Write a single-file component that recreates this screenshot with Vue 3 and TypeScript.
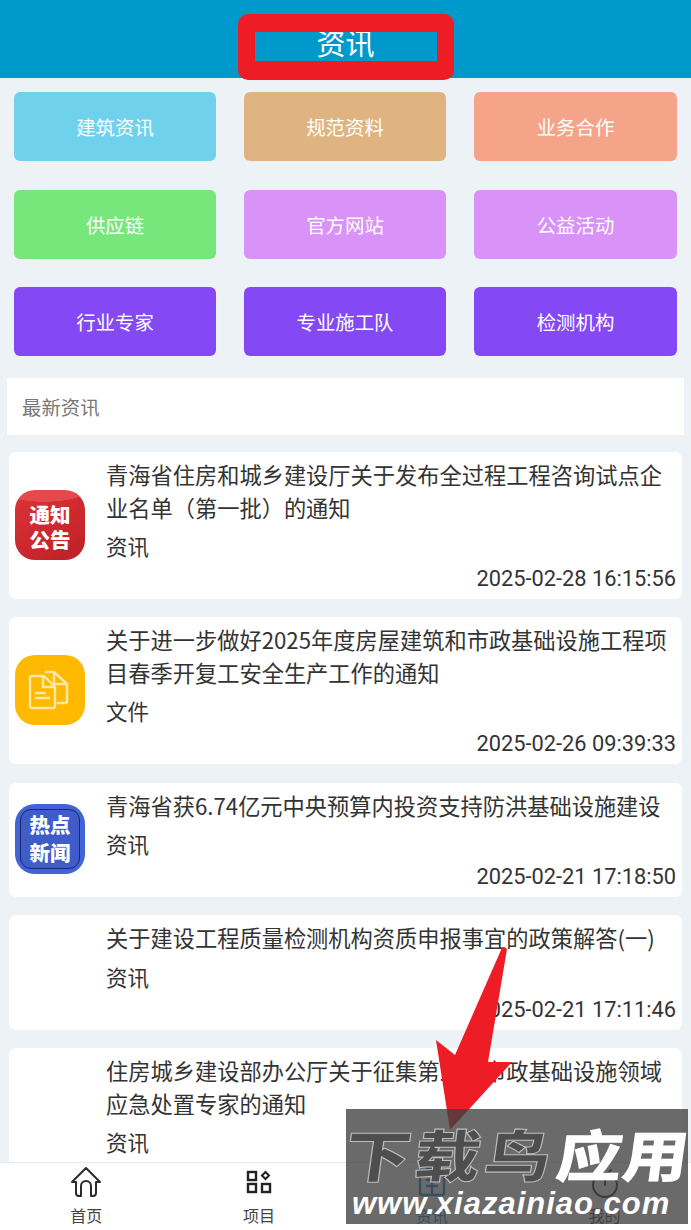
<script setup lang="ts">
interface Item { title: string; tag: string; time: string; icon: string }
const links: { label: string; color: string }[] = [
  { label: '建筑资讯', color: '#70d1ed' },
  { label: '规范资料', color: '#dfb480' },
  { label: '业务合作', color: '#f6a489' },
  { label: '供应链', color: '#77e67b' },
  { label: '官方网站', color: '#d892f8' },
  { label: '公益活动', color: '#d892f8' },
  { label: '行业专家', color: '#8449f5' },
  { label: '专业施工队', color: '#8449f5' },
  { label: '检测机构', color: '#8449f5' }
]
const items: Item[] = [
  { title: '青海省住房和城乡建设厅关于发布全过程工程咨询试点企业名单（第一批）的通知', tag: '资讯', time: '2025-02-28 16:15:56', icon: 'notice' },
  { title: '关于进一步做好2025年度房屋建筑和市政基础设施工程项目春季开复工安全生产工作的通知', tag: '文件', time: '2025-02-26 09:39:33', icon: 'file' },
  { title: '青海省获6.74亿元中央预算内投资支持防洪基础设施建设', tag: '资讯', time: '2025-02-21 17:18:50', icon: 'hot' },
  { title: '关于建设工程质量检测机构资质申报事宜的政策解答(一)', tag: '资讯', time: '2025-02-21 17:11:46', icon: 'none' },
  { title: '住房城乡建设部办公厅关于征集第三批市政基础设施领域应急处置专家的通知', tag: '资讯', time: '2025-02-20 10:02:11', icon: 'none' }
]
</script>

<template>
  <div class="page">
    <header class="nav">资讯</header>
    <section class="grid">
      <a v-for="l in links" :key="l.label" class="tile" :style="{ background: l.color }">{{ l.label }}</a>
    </section>
    <h2 class="heading">最新资讯</h2>
    <section class="list">
      <article v-for="it in items" :key="it.title" class="card">
        <div class="thumb">
          <div v-if="it.icon === 'notice'" class="logo notice"><span>通知</span><span>公告</span></div>
          <div v-else-if="it.icon === 'file'" class="logo file">
            <svg width="70" height="70" viewBox="0 0 70 70" fill="none" stroke="#ffe7a6" stroke-width="2.400" stroke-linejoin="round">
              <path d="M30 17h9l13 12v17a2 2 0 0 1-2 2h-8" />
              <path d="M39 17v12h13" />
              <path d="M17 21h12l11 11v19a2 2 0 0 1-2 2H17a2 2 0 0 1-2-2V23a2 2 0 0 1 2-2z" fill="#ffb900" />
              <path d="M28 21v11h12M20 38h11M20 43h15" />
            </svg>
          </div>
          <div v-else-if="it.icon === 'hot'" class="logo hot"><div class="hot-in"><span>热点</span><span>新闻</span></div></div>
        </div>
        <div class="body">
          <h3 class="title">{{ it.title }}</h3>
          <div class="tag">{{ it.tag }}</div>
          <div class="time">{{ it.time }}</div>
        </div>
      </article>
    </section>

    <nav class="tabbar">
      <div class="tab">
        <svg width="32" height="32" viewBox="0 0 32 32" fill="none" stroke="#2b2b2b" stroke-width="2" stroke-linejoin="round" stroke-linecap="round">
          <path d="M16 2 2 16h4v11a3 3 0 0 0 3 3h2V20a5 5 0 0 1 10 0v10h2a3 3 0 0 0 3-3V16h4z" />
        </svg>
        <span>首页</span>
      </div>
      <div class="tab">
        <svg width="32" height="32" viewBox="0 0 32 32" fill="none" stroke="#222" stroke-width="2.400">
          <rect x="5" y="6" width="8" height="8" /><rect x="5" y="18" width="8" height="8" /><rect x="19" y="18" width="8" height="8" />
          <path d="M22.500 6 26 9.500 22.500 13 19 9.500z" stroke-width="2" />
        </svg>
        <span>项目</span>
      </div>
      <div class="tab active">
        <svg width="32" height="32" viewBox="0 0 32 32" fill="none" stroke="#1a82c9" stroke-width="2.500">
          <rect x="4" y="7" width="24" height="22" rx="2" /><path d="M10 2h12v5M10 14h12M10 20h12M16 7v22" />
        </svg>
        <span>资讯</span>
      </div>
      <div class="tab">
        <svg width="32" height="32" viewBox="0 0 32 32" fill="none" stroke="#2b2b2b" stroke-width="2" stroke-linecap="round">
          <circle cx="16" cy="19" r="12" /><path d="M16 14v5M10 4l3 3M22 4l-3 3" />
        </svg>
        <span>我的</span>
      </div>
    </nav>

    <div class="frame"></div>
    <svg class="arrow" width="100" height="200" viewBox="0 0 100 200">
      <path d="M75 4 C72 1 70 2 69 5 L23 110 L4 95 L18 185 L80 117 L56 117 Z" fill="#ee1c25" />
    </svg>
    <div class="mark">
      <div class="mark-top"><span class="dark">下载鸟</span><span class="light">应用</span></div>
      <div class="mark-url">www.xiazainiao.com</div>
    </div>
  </div>
</template>

<style>
html, body { margin: 0; padding: 0; }
</style>

<style scoped>
.page {
  position: relative;
  width: 691px;
  height: 1230px;
  overflow: hidden;
  background: #edf2f7;
  font-family: "Noto Sans CJK SC", "Noto Sans", sans-serif;
}
.nav {
  height: 78px;
  background: #0099cc;
  color: #fff;
  font-size: 29px;
  line-height: 84px;
  text-align: center;
}
.grid {
  display: grid;
  grid-template-columns: 202px 202px 203px;
  column-gap: 28px;
  row-gap: 28.500px;
  padding: 14px 14px 0;
}
.tile {
  height: 69px;
  border-radius: 6px;
  color: #fff;
  font-size: 19.400px;
  display: flex;
  align-items: center;
  justify-content: center;
}
.heading {
  margin: 22px 7px 0;
  height: 57px;
  padding-left: 15px;
  background: #fff;
  color: #777;
  font-size: 19.400px;
  font-weight: 400;
  line-height: 58px;
}
.list {
  display: flex;
  flex-direction: column;
  gap: 18.250px;
  margin: 17px 9px 0;
}
.card {
  display: flex;
  align-items: center;
  background: #fff;
  border-radius: 7px;
  padding: 6px 6px 7px;
}
.thumb { width: 70px; height: 70px; flex: none; margin-right: 21px; }
.logo {
  width: 70px;
  height: 70px;
  border-radius: 20px;
  display: flex;
  flex-direction: column;
  align-items: center;
  justify-content: center;
  box-sizing: border-box;
}
.notice {
  background:
    radial-gradient(ellipse 62% 17% at 42% 0, #e24a4c 97%, transparent 100%),
    linear-gradient(150deg, #dc3438, #bd2027);
  color: #fff;
  font-weight: 900;
  font-size: 20.500px;
  line-height: 25px;
  padding-top: 4px;
}
.file { background: #ffb900; }
.hot { background: #4262d8; padding: 5px; }
.hot-in {
  width: 100%;
  height: 100%;
  border: 1px solid #1c2a66;
  border-radius: 11px;
  background: #3f5cc8;
  color: #fff;
  font-weight: 900;
  font-size: 20.500px;
  line-height: 28px;
  display: flex;
  flex-direction: column;
  align-items: center;
  justify-content: center;
  box-sizing: border-box;
  padding-bottom: 3px;
}
.body { flex: 1; min-width: 0; }
.title {
  margin: 0;
  color: #333;
  font-size: 22.240px;
  font-weight: 400;
  line-height: 32.500px;
}
.tag {
  height: 45px;
  line-height: 45px;
  color: #333;
  font-size: 21.500px;
}
.time {
  height: 26px;
  margin-top: -2px;
  line-height: 26px;
  text-align: right;
  color: #333;
  font-family: Roboto, sans-serif;
  font-size: 21.800px;
}
.tabbar {
  position: absolute;
  left: 0;
  right: 0;
  bottom: 0;
  height: 67px;
  display: grid;
  grid-template-columns: repeat(4, 1fr);
  background: #fff;
  border-top: 1px solid #e8e8e8;
}
.tab {
  display: flex;
  flex-direction: column;
  align-items: center;
  padding-top: 3px;
  color: #444;
  font-size: 16px;
  line-height: 22px;
  gap: 6px;
}
.tab.active { color: #1a82c9; }
.frame {
  position: absolute;
  left: 238px;
  top: 14px;
  width: 182px;
  height: 29px;
  border: solid #ee1c25;
  border-width: 18px 17px 19px;
  border-radius: 10px;
}
.arrow { position: absolute; left: 432px; top: 945px; }
.mark {
  position: absolute;
  left: 346px;
  top: 1109px;
  width: 342px;
  height: 115px;
  background: rgba(64, 64, 64, 0.78);
  overflow: hidden;
}
.mark-top {
  position: absolute;
  left: 3px;
  top: 18px;
  font-size: 66px;
  line-height: 60px;
  font-weight: 900;
  white-space: nowrap;
  transform: skewX(-8deg) scaleY(0.85);
  transform-origin: left top;
}
.dark { color: #4e4e4e; -webkit-text-stroke: 1.200px #bdbdbd; letter-spacing: 4px; }
.light { color: #fff; margin-left: 2px; }
.mark-url {
  position: absolute;
  left: 6px;
  top: 78px;
  color: #fff;
  font-family: "Liberation Sans", sans-serif;
  font-size: 31px;
  line-height: 34px;
  font-weight: 700;
  font-style: italic;
  letter-spacing: 1px;
  white-space: nowrap;
}
</style>
